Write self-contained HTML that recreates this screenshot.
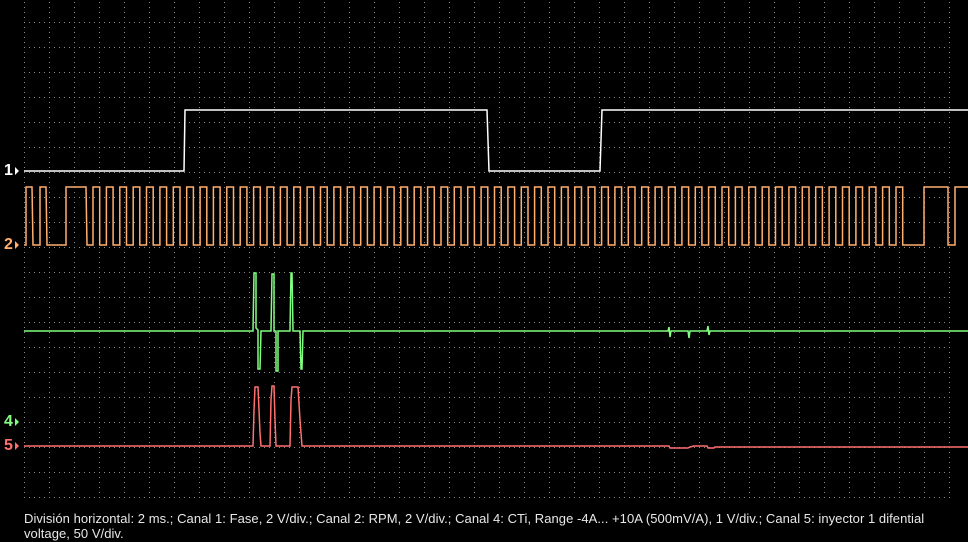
<!DOCTYPE html>
<html><head><meta charset="utf-8"><style>
html,body{margin:0;padding:0;background:#000;width:968px;height:542px;overflow:hidden}
svg{position:absolute;left:0;top:0}
.t{position:absolute;left:24px;top:511px;width:915px;color:#e8e8e8;font-family:"Liberation Sans",Arial,sans-serif;font-size:13px;letter-spacing:0.05px;line-height:15px}
.l{position:absolute;left:4px;font-family:"Liberation Sans",Arial,sans-serif;font-size:16px;font-weight:bold;line-height:16px}
</style></head><body>
<svg width="968" height="542" xmlns="http://www.w3.org/2000/svg">
<defs><pattern id="g" x="24" y="22" width="25" height="25" patternUnits="userSpaceOnUse">
<rect x="0" y="0" width="1" height="1" fill="#8a8a8a"/><rect x="5" y="0" width="1" height="1" fill="#8a8a8a"/><rect x="10" y="0" width="1" height="1" fill="#8a8a8a"/><rect x="15" y="0" width="1" height="1" fill="#8a8a8a"/><rect x="20" y="0" width="1" height="1" fill="#8a8a8a"/>
<rect x="0" y="5" width="1" height="1" fill="#8a8a8a"/><rect x="0" y="10" width="1" height="1" fill="#8a8a8a"/><rect x="0" y="15" width="1" height="1" fill="#8a8a8a"/><rect x="0" y="20" width="1" height="1" fill="#8a8a8a"/>
</pattern></defs>
<rect x="24" y="2" width="926" height="500" fill="url(#g)"/>
<polyline fill="none" stroke="#fff" stroke-width="1.5" points="24,171 184,171 185,110 487,110 489,171 600,171 602,110 968,110"/>
<polyline id="o" fill="none" stroke="#ffb070" stroke-width="1.5" points=""/>
<polyline fill="none" stroke="#80ff80" stroke-width="1.5" points="24,331 253,331 254,273 256,273 256,328 258,330 258,369 260,369 261,331 271,331 272,274 274,274 274,331 276,331 276,371 278,371 278,331 290,331 291,273 292,273 293,331 300,331 301,369 302,369 303,331 668,331 669,327 670,337 671,331 688,331 689,338 690,331 707,331 708,326 709,335 710,331 968,331"/>
<polyline fill="none" stroke="#ff7070" stroke-width="1.5" points="24,446 253,446 254,410 255,387 258,387 259,410 260,433 261,446 270,446 271,400 272,386 274,386 275,420 276,446 290,446 291,400 292,387 298,387 300,420 302,446 669,446 670,448 688,448 690,447 694,446 707,446 708,448 714,448 715,447 968,447"/>
<polygon points="15,167 19,171 15,175" fill="#fff"/>
<polygon points="15,241 19,245 15,249" fill="#ffb070"/>
<polygon points="15,418 19,422 15,426" fill="#80ff80"/>
<polygon points="15,442 19,446 15,450" fill="#ff7070"/>
</svg>
<div class="l" style="top:163px;color:#fff">1</div>
<div class="l" style="top:237px;color:#ffb070">2</div>
<div class="l" style="top:414px;color:#80ff80">4</div>
<div class="l" style="top:438px;color:#ff7070">5</div>
<div class="t">División horizontal: 2 ms.; Canal 1: Fase, 2 V/div.; Canal 2: RPM, 2 V/div.; Canal 4: CTi, Range -4A... +10A (500mV/A), 1 V/div.; Canal 5: inyector 1 difential voltage, 50 V/div.</div>
<script>
var H=187,L=245,p=[[24,L],[26,L],[26,H],[32,H],[33,L],[40,L],[40,H],[46,H],[47,L],[66,L],[66,H],[86,H],[87,L]];
var s=93,e=896,n=60,per=(e-s)/n;
for(var k=0;k<=n;k++){var x=s+k*per;p.push([x,L],[x,H],[x+per*0.5,H],[x+per*0.5,L]);}
p.push([924,L],[924,H],[948,H],[948,L],[955,L],[955,H],[968,H]);
document.getElementById('o').setAttribute('points',p.map(function(a){return a[0].toFixed(1)+','+a[1]}).join(' '));
</script>
</body></html>
